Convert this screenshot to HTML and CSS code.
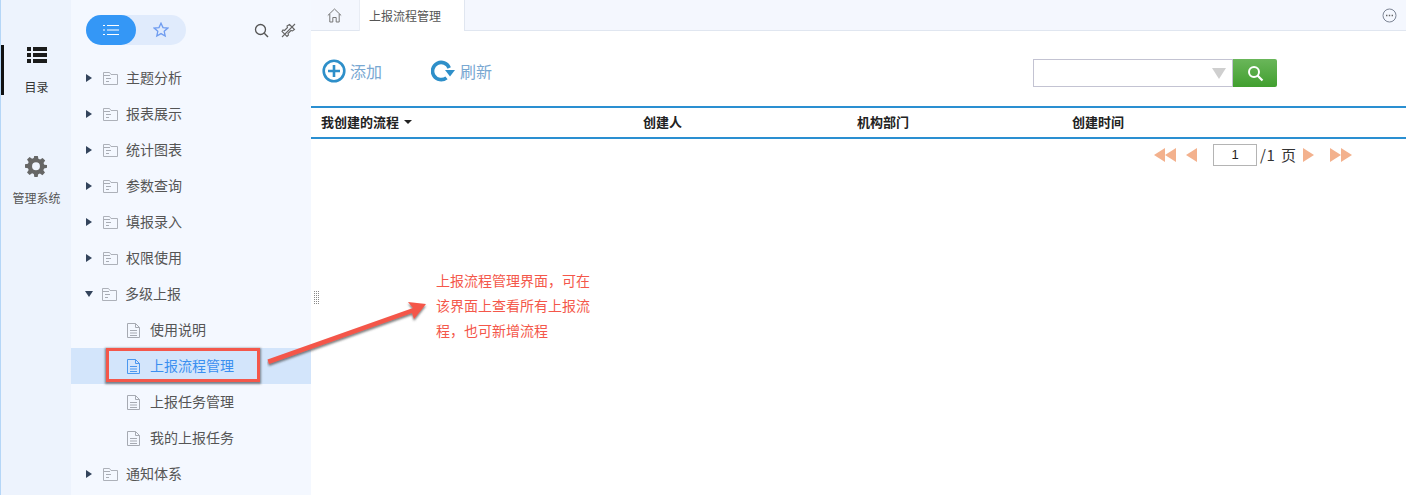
FILE: index.html
```html
<!DOCTYPE html>
<html lang="zh">
<head>
<meta charset="utf-8">
<title>上报流程管理</title>
<link rel="stylesheet" href="styles.css">
</head>
<body>
<div class="app">
  <nav class="rail">
    <div class="rail-item active">
      <svg class="rail-icon" width="20" height="16" viewBox="0 0 20 16"><path fill="#1b1b1b" d="M0 0h4v4H0zM6 0h14v4H6zM0 6h4v4H0zM6 6h14v4H6zM0 12h4v4H0zM6 12h14v4H6z"/></svg>
      <span>目录</span>
    </div>
    <div class="rail-item">
      <svg class="rail-icon" width="22" height="22" viewBox="0 0 24 24"><path fill="#666" fill-rule="evenodd" d="M10 1h4l.6 3.2 1.9.8 2.7-1.8 2.8 2.8-1.8 2.7.8 1.9L24 11v3l-3.200.6-.8 1.900 1.800 2.700-2.800 2.800-2.700-1.800-1.900.8L13.800 24h-3.600l-.6-3.200-1.900-.8-2.700 1.800-2.800-2.800 1.800-2.700-.8-1.900L0 13.800v-3.600l3.200-.6.8-1.900L2.200 5l2.800-2.800 2.700 1.800 1.900-.8zM12 8a4.300 4.300 0 1 0 0 8.600A4.300 4.300 0 0 0 12 8z"/></svg>
      <span>管理系统</span>
    </div>
  </nav>

  <aside class="side">
    <div class="side-top">
      <div class="toggle">
        <span class="toggle-on">
          <svg width="16" height="12" viewBox="0 0 16 12"><path stroke="#fff" fill="none" d="M0 1.500h2M4 1.500h12M0 6h2M4 6h12M0 10.500h2M4 10.500h12"/></svg>
        </span>
        <span class="toggle-off">
          <svg width="16" height="16" viewBox="0 0 16 16"><path fill="none" stroke="#6f9cf0" stroke-width="1.300" d="M8 1.200l2 4.400 4.800.5-3.600 3.200 1 4.700L8 11.600 3.800 14l1-4.700L1.200 6.100 6 5.600z"/></svg>
        </span>
      </div>
      <div class="side-tools">
        <svg width="15" height="15" viewBox="0 0 15 15"><circle cx="6.500" cy="6.500" r="5" fill="none" stroke="#555" stroke-width="1.300"/><path d="M10.300 10.300l3.700 3.700" stroke="#555" stroke-width="1.400"/></svg>
        <svg width="15" height="15" viewBox="0 0 15 15"><g fill="none" stroke="#666" stroke-width="1.100"><path d="M8.500 1.500l5 5-2 1.500-1.500-.5-3 3 .5 1.500-1.500 1.500-5-5L2 7l1.500.5 3-3L6 3z"/><path d="M1 14l13-13"/></g></svg>
      </div>
    </div>

    <ul class="tree">
      <li class="row"><i class="tri"></i><svg class="folder" width="15" height="15" viewBox="0 0 15 15"><use href="#ico-folder"/></svg><span>主题分析</span></li>
      <li class="row"><i class="tri"></i><svg class="folder" width="15" height="15" viewBox="0 0 15 15"><use href="#ico-folder"/></svg><span>报表展示</span></li>
      <li class="row"><i class="tri"></i><svg class="folder" width="15" height="15" viewBox="0 0 15 15"><use href="#ico-folder"/></svg><span>统计图表</span></li>
      <li class="row"><i class="tri"></i><svg class="folder" width="15" height="15" viewBox="0 0 15 15"><use href="#ico-folder"/></svg><span>参数查询</span></li>
      <li class="row"><i class="tri"></i><svg class="folder" width="15" height="15" viewBox="0 0 15 15"><use href="#ico-folder"/></svg><span>填报录入</span></li>
      <li class="row"><i class="tri"></i><svg class="folder" width="15" height="15" viewBox="0 0 15 15"><use href="#ico-folder"/></svg><span>权限使用</span></li>
      <li class="row"><i class="tri open"></i><svg class="folder" width="15" height="15" viewBox="0 0 15 15"><use href="#ico-folder"/></svg><span>多级上报</span></li>
      <li class="row leaf"><svg class="doc" width="13" height="15" viewBox="0 0 13 15"><use href="#ico-doc"/></svg><span>使用说明</span></li>
      <li class="row leaf current"><svg class="doc" width="13" height="15" viewBox="0 0 13 15"><use href="#ico-doc"/></svg><span>上报流程管理</span></li>
      <li class="row leaf"><svg class="doc" width="13" height="15" viewBox="0 0 13 15"><use href="#ico-doc"/></svg><span>上报任务管理</span></li>
      <li class="row leaf"><svg class="doc" width="13" height="15" viewBox="0 0 13 15"><use href="#ico-doc"/></svg><span>我的上报任务</span></li>
      <li class="row"><i class="tri"></i><svg class="folder" width="15" height="15" viewBox="0 0 15 15"><use href="#ico-folder"/></svg><span>通知体系</span></li>
    </ul>
  </aside>

  <main class="main">
    <div class="tabs">
      <div class="home">
        <svg width="15" height="15" viewBox="0 0 15 15"><path fill="none" stroke="#777" d="M.8 7.500L7.500 1l6.700 6.500M2.800 6v8h3V9.500h3.400V14h3V6"/></svg>
      </div>
      <div class="tab">上报流程管理</div>
      <div class="tabs-fill"></div>
      <svg class="more" width="15" height="15" viewBox="0 0 15 15"><circle cx="7.500" cy="7.500" r="6.500" fill="none" stroke="#7c8494"/><path d="M4 6.800h1.400v1.400H4zM6.800 6.800h1.400v1.400H6.800zM9.600 6.800H11v1.400H9.600z" fill="#666"/></svg>
    </div>

    <div class="toolbar">
      <div class="action">
        <svg width="24" height="24" viewBox="0 0 24 24"><circle cx="12" cy="12" r="10.300" fill="none" stroke="#2e8fc9" stroke-width="2.600"/><path d="M12 6v12M6 12h12" stroke="#2e8fc9" stroke-width="2.600"/></svg>
        <span>添加</span>
      </div>
      <div class="action">
        <svg width="25" height="22" viewBox="0 0 25 22"><path fill="none" stroke="#2e8fc9" stroke-width="3.600" d="M15.500 17.800A8.600 8.600 0 1 1 18.200 8"/><path fill="#2e8fc9" d="M14 10h10l-5 6.500z"/></svg>
        <span>刷新</span>
      </div>
      <div class="search">
        <div class="combo"><i class="combo-arrow"></i></div>
        <button class="search-btn" type="button">
          <svg width="17" height="17" viewBox="0 0 17 17"><circle cx="7" cy="7" r="5" fill="none" stroke="#fff" stroke-width="2"/><path d="M10.500 10.500l5 5" stroke="#fff" stroke-width="2.200"/></svg>
        </button>
      </div>
    </div>

    <div class="thead">
      <div class="th th-flow">我创建的流程<i class="caret"></i></div>
      <div class="th th-user">创建人</div>
      <div class="th th-dept">机构部门</div>
      <div class="th th-time">创建时间</div>
    </div>

    <div class="pager">
      <i class="arr left"></i><i class="arr left tight"></i>
      <i class="arr left single"></i>
      <span class="page-input">1</span>
      <span class="page-total">/1 页</span>
      <i class="arr right single-r"></i>
      <i class="arr right"></i><i class="arr right tight"></i>
    </div>

    <div class="grip"></div>
  </main>
</div>

<div class="note-box"></div>
<svg class="note-arrow" width="170" height="90" viewBox="0 0 170 90">
  <defs>
    <filter id="sh" x="-10%" y="-10%" width="120%" height="130%"><feDropShadow dx="0" dy="2" stdDeviation="1" flood-color="#444" flood-opacity=".7"/></filter>
  </defs>
  <path filter="url(#sh)" fill="#f4574a" d="M.5 77.500L146 26 141 20 159 22 147 37 145 31 2 82z"/>
</svg>
<p class="note-text">上报流程管理界面，可在该界面上查看所有上报流程，也可新增流程</p>

<svg class="defs" width="0" height="0">
  <symbol id="ico-folder" viewBox="0 0 15 15"><path fill="none" stroke="#adb1b9" d="M.5 13.500V1.500h6l1.500 2h6.500v10z"/><path stroke="#a8acb4" d="M1 4.500h6M3 7.500h5M3 10.500h3"/></symbol>
  <symbol id="ico-doc" viewBox="0 0 13 15"><path fill="none" stroke="currentColor" d="M.5.500h8l4 4v10H.5z"/><path fill="none" stroke="currentColor" d="M8.500.500v4h4M3 7.500h7M3 10h7M3 12.500h7"/></symbol>
</svg>
</body>
</html>
```

FILE: styles.css
```css
* { box-sizing: border-box; }
html, body { margin: 0; height: 100%; overflow: hidden; background: #fff; }
body { font-family: "Noto Sans CJK SC", "Liberation Sans", sans-serif; font-size: 14px; color: #444; position: relative; }
ul { list-style: none; margin: 0; padding: 0; }
i { display: block; font-style: normal; }

.app { display: flex; width: 1406px; height: 495px; }

.rail { width: 71px; flex: none; background: #edf3fd; border-left: 1px solid #b5d6f7; padding-top: 45px; display: flex; flex-direction: column; gap: 50px; }
.rail-item { height: 50px; display: flex; flex-direction: column; align-items: center; font-size: 12px; line-height: 16px; color: #333; padding-left: 1px; position: relative; }
.rail-item .rail-icon { margin-top: 2px; margin-bottom: 16px; flex: none; }
.rail-item + .rail-item { padding-top: 10px; color: #555; }
.rail-item + .rail-item .rail-icon { margin: 0 2px 13px 0; }
.rail-item.active::before { content: ""; position: absolute; left: 0; top: 0; width: 3px; height: 50px; background: #111; }

.side { width: 240px; flex: none; background: #f4f8ff; }
.side-top { height: 60px; padding: 15px 15px 0; display: flex; justify-content: space-between; }
.toggle { width: 100px; height: 30px; border-radius: 15px; background: #e0ebfc; display: flex; }
.toggle-on { width: 50px; height: 30px; border-radius: 15px; background: #3497f6; display: flex; align-items: center; justify-content: center; }
.toggle-off { width: 50px; display: flex; align-items: center; justify-content: center; }
.side-tools { display: flex; gap: 12px; padding-top: 8px; height: 24px; }

.row { height: 36px; display: flex; align-items: center; padding-left: 15px; color: #555; line-height: 20px; }
.row span { margin-top: -2px; }
.tri { width: 0; height: 0; border-style: solid; border-width: 4.500px 0 4.500px 6px; border-color: transparent transparent transparent #33445c; margin-right: 11px; }
.tri.open { border-width: 6px 4.500px 0; border-color: #33445c transparent transparent; margin-left: -1px; margin-right: 9px; }
.folder { margin-right: 8px; flex: none; }
.leaf { padding-left: 56px; color: #555; }
.doc { margin-right: 10px; flex: none; color: #a6aab2; }
.current { background: #d3e5fb; color: #3a8ff0; }
.current .doc { color: #4b97ef; }
.defs { position: absolute; }

.main { flex: 1; min-width: 0; position: relative; }
.tabs { height: 31px; display: flex; align-items: stretch; background: #f4f7fe; border-bottom: 1px solid #e0e6f0; position: relative; }
.home { width: 48px; display: flex; align-items: center; justify-content: center; padding-right: 2px; }
.tab { width: 106px; background: #fff; border-left: 1px solid #e8ecf4; border-right: 1px solid #e0e6f0; font-size: 12px; line-height: 32px; padding-left: 9px; color: #555; margin-bottom: -1px; }
.tabs-fill { flex: 1; }
.more { align-self: center; margin-right: 9px; }

.toolbar { height: 75px; display: flex; align-items: center; padding: 5px 129px 0 11px; }
.action { display: flex; align-items: center; font-size: 16px; color: #79a8d2; line-height: 24px; margin-right: 49px; gap: 4px; }
.search { margin-left: auto; margin-top: 4px; display: flex; }
.combo { width: 200px; height: 28px; background: #fff; border: 1px solid #c3c3d2; position: relative; }
.combo-arrow { position: absolute; right: 6px; top: 8px; width: 0; height: 0; border-style: solid; border-width: 11px 7px 0; border-color: #cfcfcf transparent transparent; }
.search-btn { width: 44px; height: 28px; padding: 0; border: 0; border-radius: 0 2px 2px 0; background: linear-gradient(#6ab65a, #419f2f); display: flex; align-items: center; justify-content: center; }

.thead { height: 33px; padding-bottom: 2px; border-top: 2px solid #2a8fd1; border-bottom: 2px solid #2a8fd1; display: flex; align-items: center; font-size: 13px; font-weight: 700; color: #222; line-height: 27px; }
.th-flow { width: 332px; padding-left: 10px; display: flex; align-items: center; }
.th-user { width: 214px; }
.th-dept { width: 215px; }
.caret { width: 0; height: 0; border-style: solid; border-width: 4px 4px 0; border-color: #222 transparent transparent; margin-left: 5px; }

.pager { display: flex; align-items: center; height: 32px; padding-left: 843px; color: #333; }
.arr { width: 0; height: 0; border-style: solid; }
.left { border-width: 7px 11px 7px 0; border-color: transparent #f3b18d transparent transparent; }
.right { border-width: 7px 0 7px 11px; border-color: transparent transparent transparent #f3b18d; }
.tight { margin-left: 0; }
.single { margin-left: 10px; }
.page-input { width: 44px; height: 22px; margin-left: 16px; border: 1px solid #b4b4b4; font: 13px/20px "Liberation Sans", sans-serif; text-align: center; color: #222; }
.page-total { margin-left: 3px; font-size: 15px; line-height: 20px; letter-spacing: .5px; word-spacing: 2px; white-space: nowrap; }
.single-r { margin-left: 6px; }
.single-r + .right { margin-left: 16px; }

.grip { position: absolute; left: 2px; top: 291px; width: 6px; height: 14px; background: conic-gradient(#888 25%, transparent 0) 0 0 / 2px 2px; }

.note-box { position: absolute; left: 106px; top: 348px; width: 154px; height: 34px; border: 3px solid #f4574a; box-shadow: 0 1px 2px 1px rgba(60, 60, 60, .6); }
.note-arrow { position: absolute; left: 267px; top: 282px; }
.note-text { position: absolute; left: 436px; top: 268px; width: 156px; margin: 0; font-size: 14px; line-height: 25px; color: #f4574a; }
```
